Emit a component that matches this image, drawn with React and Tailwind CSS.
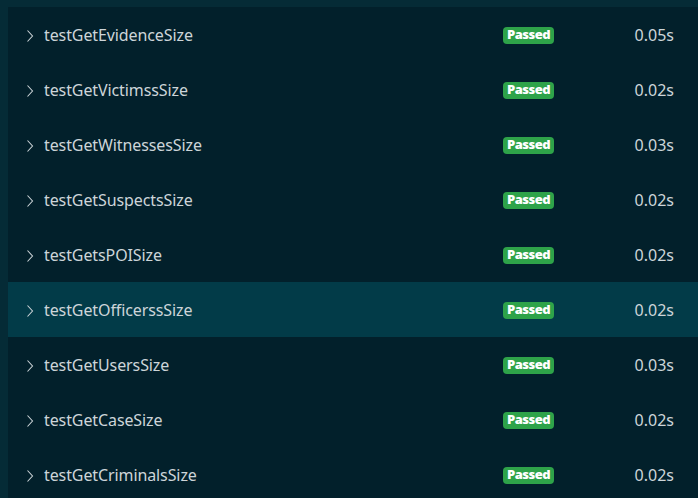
import React from "react";

const rows = [
  ["testGetEvidenceSize", "0.05s"],
  ["testGetVictimssSize", "0.02s"],
  ["testGetWitnessesSize", "0.03s"],
  ["testGetSuspectsSize", "0.02s"],
  ["testGetsPOISize", "0.02s"],
  ["testGetOfficerssSize", "0.02s", true],
  ["testGetUsersSize", "0.03s"],
  ["testGetCaseSize", "0.02s"],
  ["testGetCriminalsSize", "0.02s"],
];

function Chevron() {
  return (
    <svg width="8" height="14" viewBox="0 0 8 14" className="shrink-0 mt-[3px]">
      <path d="M1.5 1.5 L6.5 7 L1.5 12.5" fill="none" stroke="#c9d1d5" strokeWidth="1.1" />
    </svg>
  );
}

export default function App() {
  return (
    <div className="w-[698px] h-[498px] overflow-hidden bg-[#052b36] pt-[7px] pl-[8px]">
      <div className="bg-[#02202b] h-full" style={{ fontFamily: '"Noto Sans", sans-serif' }}>
        {rows.map(([name, time, hl]) => (
          <div
            key={name}
            className={`h-[55px] flex items-center pl-[18px] pr-[24px] ${hl ? "bg-[#023b48]" : ""}`}
          >
            <Chevron />
            <span className="ml-[10px] mt-[1px] text-[16px] tracking-[-0.1px] text-[#cdd5d9] flex-1">{name}</span>
            <span
              className="w-[51px] h-[17px] mt-[1px] rounded-[4px] bg-[#2ea349] text-white text-[13px] font-extrabold flex items-center justify-center tracking-[-0.5px]"
              style={{ fontFamily: '"Open Sans", sans-serif' }}
            >
              Passed
            </span>
            <span className="w-[120px] mt-[1px] text-right text-[16px] text-[#cdd5d9]">{time}</span>
          </div>
        ))}
      </div>
    </div>
  );
}
